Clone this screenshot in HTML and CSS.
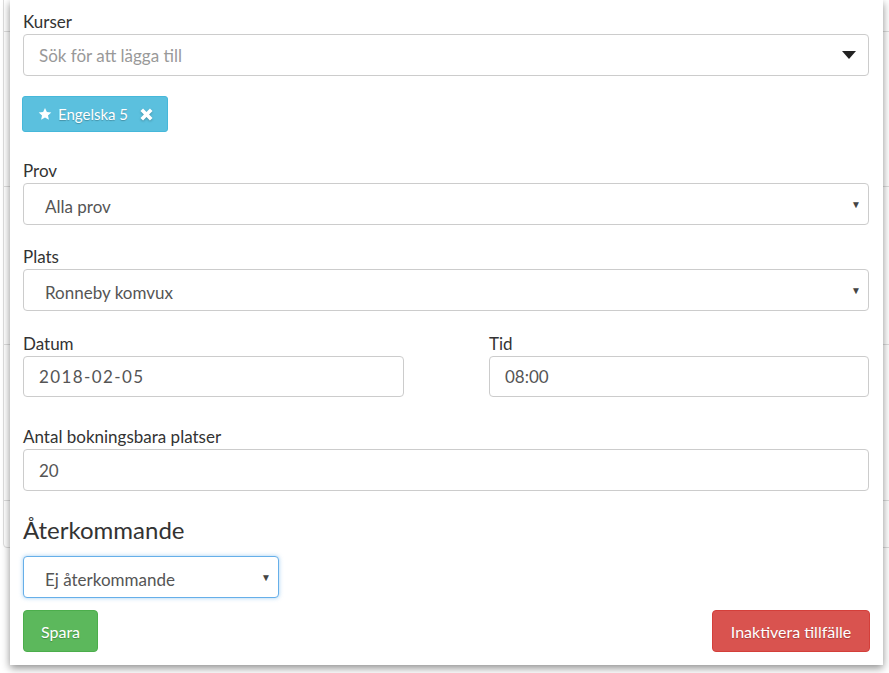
FILE: index.html
```html
<!DOCTYPE html>
<html lang="sv">
<head>
<meta charset="utf-8">
<link rel="stylesheet" href="styles.css">
</head>
<body>
<div class="bg-card">
  <div class="bg-row r1"></div>
  <div class="bg-row r2"></div>
  <div class="bg-row r3"></div>
  <div class="bg-row r4"></div>
</div>

<div class="modal">
  <div class="group">
    <label class="lbl">Kurser</label>
    <div class="ctl s2">
      <span class="ph">Sök för att lägga till</span>
      <svg class="caret-big" width="14" height="8" viewBox="0 0 14 8"><path d="M0 0H14L7 8Z" fill="#222"/></svg>
    </div>
  </div>

  <div class="tags">
    <span class="tag">
      <svg class="star" width="14" height="14" viewBox="0 0 24 24"><path d="M12 1.5l3.2 7 7.6.8-5.7 5.1 1.6 7.5L12 18l-6.7 3.9 1.6-7.5L1.2 9.3l7.6-.8z" fill="#fff"/></svg>
      <span class="tag-text">Engelska 5</span>
      <svg class="rm" width="13" height="13" viewBox="0 0 14 14"><path d="M0.5 3.3L3.3 0.5 7 4.2 10.7 0.5 13.5 3.3 9.8 7 13.5 10.7 10.7 13.5 7 9.8 3.3 13.5 0.5 10.7 4.2 7Z" fill="#fff"/></svg>
    </span>
  </div>

  <div class="group g-prov">
    <label class="lbl">Prov</label>
    <div class="ctl sel"><span class="val">Alla prov</span><span class="caret">▼</span></div>
  </div>

  <div class="group g-plats">
    <label class="lbl">Plats</label>
    <div class="ctl sel"><span class="val">Ronneby komvux</span><span class="caret">▼</span></div>
  </div>

  <div class="row2">
    <div class="group">
      <label class="lbl">Datum</label>
      <div class="ctl inp"><span class="val2 date">2018-02-05</span></div>
    </div>
    <div class="group">
      <label class="lbl">Tid</label>
      <div class="ctl inp"><span class="val2">08:00</span></div>
    </div>
  </div>

  <div class="group g-antal">
    <label class="lbl">Antal bokningsbara platser</label>
    <div class="ctl inp"><span class="val2">20</span></div>
  </div>

  <h3 class="heading">Återkommande</h3>
  <div class="ctl sel focus"><span class="val">Ej återkommande</span><span class="caret">▼</span></div>

  <div class="actions">
    <button class="btn green">Spara</button>
    <button class="btn red">Inaktivera tillfälle</button>
  </div>
</div>
</body>
</html>
```
FILE: styles.css
```css
html, body {
  margin: 0;
  padding: 0;
  width: 889px;
  height: 673px;
  overflow: hidden;
  background: #fff;
  font-family: "Lato", "Open Sans", sans-serif;
  color: #333;
}

.bg-card {
  position: absolute;
  left: 3px;
  top: -20px;
  width: 920px;
  height: 568px;
  border: 1px solid #ddd;
  border-radius: 4px;
  box-sizing: border-box;
}
.bg-row {
  position: absolute;
  left: 0;
  right: 0;
  height: 0;
  border-top: 1px solid #ddd;
}
.r1 { top: 50px; }
.r2 { top: 205px; }
.r3 { top: 363px; }
.r4 { top: 519px; }

.modal {
  position: absolute;
  left: 10px;
  top: 0;
  width: 873px;
  height: 665px;
  box-sizing: border-box;
  background: #fff;
  padding: 12px 14px 0 13px;
  box-shadow: 0 3px 8px rgba(0,0,0,.45);
}

.lbl {
  display: block;
  font-size: 17px;
  line-height: 20px;
  margin-bottom: 2px;
}

.ctl {
  box-sizing: border-box;
  height: 42px;
  border: 1px solid #ccc;
  border-radius: 4px;
  display: flex;
  align-items: center;
  font-size: 17px;
  color: #555;
  background: #fff;
}

.s2 { padding: 0 12px 0 15px; justify-content: space-between; }
.ph { color: #999; }
.caret-big { display: block; }

.tags { margin-top: 20px; display: flex; }
.tag {
  display: inline-flex;
  align-items: center;
  height: 36px;
  box-sizing: border-box;
  padding: 0 14px 0 15px;
  background: #5bc0de;
  border: 1px solid #46b8da;
  border-radius: 3px;
  margin-left: -1px;
  color: #fff;
  font-size: 15px;
  text-shadow: 0 1px 1px rgba(0,0,0,.25);
}
.star { margin-right: 6px; }
.rm { margin-left: 12px; filter: drop-shadow(0 1px 1px rgba(0,0,0,.25)); }

.g-prov { margin-top: 29px; }
.g-plats { margin-top: 22px; }
.row2 { margin-top: 23px; }
.g-antal { margin-top: 30px; }

.sel { padding: 0 7px 0 21px; justify-content: space-between; }
.sel .val { position: relative; top: 2px; }
.caret { font-size: 10px; color: #444; }

.row2 { display: grid; grid-template-columns: 381px 380px; justify-content: space-between; }
.inp { padding: 0 15px; }
.row2 .inp { height: 41px; }
.date { letter-spacing: 1.4px; }

.heading {
  margin: 26px 0 0 0;
  font-size: 24px;
  line-height: 26px;
  font-weight: 400;
  color: #333;
}
.focus {
  margin-top: 13px;
  width: 256px;
  border-color: #66afe9;
  box-shadow: 0 0 4px rgba(102,175,233,.6);
}

.actions {
  margin-top: 12px;
  display: flex;
  justify-content: space-between;
}
.btn {
  height: 42px;
  box-sizing: border-box;
  border-radius: 4px;
  font-family: inherit;
  font-size: 16px;
  color: #fff;
  padding: 0 15px;
  text-shadow: 0 1px 1px rgba(0,0,0,.25);
}
.green { background: #5cb85c; border: 1px solid #4cae4c; width: 75px; }
.red { background: #d9534f; border: 1px solid #d43f3a; width: 158px; margin-right: -1px; }
```
